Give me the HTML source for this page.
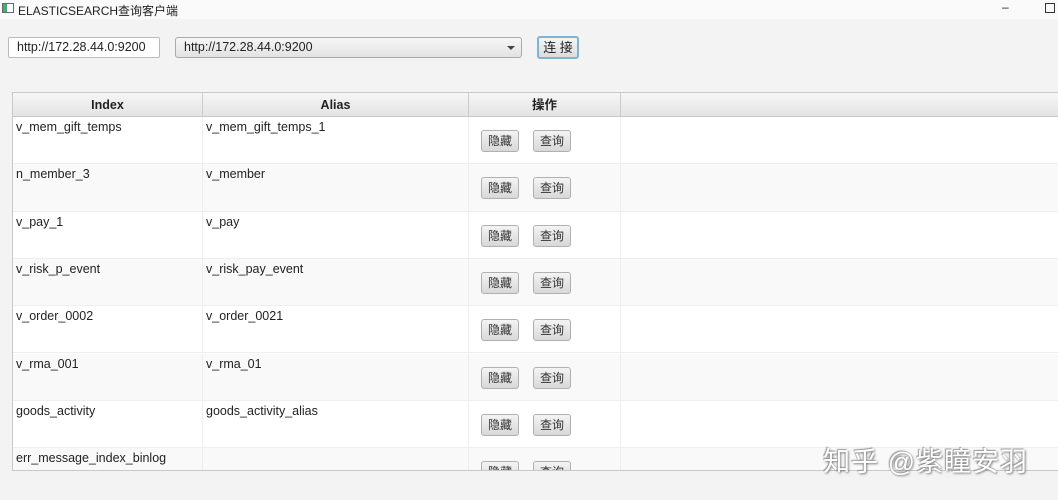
<!DOCTYPE html><html><head><meta charset="utf-8"><style>
*{box-sizing:border-box;margin:0;padding:0}
body{width:1058px;height:500px;background:#f3f3f3;font-family:"Liberation Sans","Noto Sans CJK SC",sans-serif;font-size:13px;color:#222;position:relative;overflow:hidden}
.abs{position:absolute}
.title{left:0;top:0;width:1058px;height:19px;background:#fafafa;font-size:12px}
.tf{left:8px;top:37px;width:152px;height:21px;background:#fff;border:1px solid #bbb;border-radius:2px;padding:2px 8px;font-size:12.5px}
.cb{left:175px;top:37px;width:347px;height:21px;background:linear-gradient(#f6f6f6,#e2e2e2);border:1px solid #aaa;border-radius:3px;padding:2px 8px;font-size:12.5px}
.btn{left:537px;top:36px;width:42px;height:23px;background:linear-gradient(#f6f6f6,#dcdcdc);border:2px solid #7eb4d4;border-radius:3px;text-align:center;line-height:19px;font-size:13px}
.tbl{left:12px;top:92px;width:1050px;height:379px;background:#fff;border:1px solid #c8c8c8;border-right:none;overflow:hidden}
.hdr{position:absolute;left:0;top:0;height:24px;width:1050px;background:linear-gradient(#f6f6f6,#e4e4e4);border-bottom:1px solid #c8c8c8}
.hc{position:absolute;top:0;height:24px;line-height:24px;text-align:center;font-weight:bold;font-size:12.5px;border-right:1px solid #ccc}
.row{position:absolute;left:0;width:1050px;height:47.3px;border-bottom:1px solid #eee}
.c{position:absolute;top:0;height:47.3px;border-right:1px solid #eee;padding:3px 3px;font-size:12.5px}
.b{position:absolute;top:13px;width:38px;height:22px;background:linear-gradient(#f4f4f4,#d8d8d8);border:1px solid #b0b0b0;border-radius:3px;text-align:center;line-height:20px;font-size:12px;color:#333}
.wm{right:30px;top:440px;font-size:27px;color:#fff;text-shadow:1px 1px 2px #777,-1px -1px 1px #999;letter-spacing:1px}
</style></head><body>
<div class="abs title"><span style="position:absolute;left:2px;top:3px;width:12px;height:10px;border:1px solid #666;background:linear-gradient(90deg,#4a7 40%,#fff 40%)"></span><span style="position:absolute;left:18px;top:2px">ELASTICSEARCH查询客户端</span><span style="position:absolute;left:1002px;top:0">–</span><span style="position:absolute;left:1045px;top:3px;width:10px;height:10px;border:1px solid #333"></span></div>
<div class="abs tf">http://172.28.44.0:9200</div>
<div class="abs cb">http://172.28.44.0:9200<span style="position:absolute;right:6px;top:8px;border:4px solid transparent;border-top:4px solid #444"></span></div>
<div class="abs btn">连 接</div>
<div class="abs tbl">
<div class="hdr"><div class="hc" style="left:0;width:190px">Index</div><div class="hc" style="left:190px;width:266px">Alias</div><div class="hc" style="left:456px;width:152px">操作</div></div>
<div class="row" style="top:24px;background:#fff"><div class="c" style="left:0;width:190px">v_mem_gift_temps</div><div class="c" style="left:190px;width:266px">v_mem_gift_temps_1</div><div class="c" style="left:456px;width:152px"><div class="b" style="left:12px">隐藏</div><div class="b" style="left:64px">查询</div></div></div>
<div class="row" style="top:71.3px;background:#f9f9f9"><div class="c" style="left:0;width:190px">n_member_3</div><div class="c" style="left:190px;width:266px">v_member</div><div class="c" style="left:456px;width:152px"><div class="b" style="left:12px">隐藏</div><div class="b" style="left:64px">查询</div></div></div>
<div class="row" style="top:118.6px;background:#fff"><div class="c" style="left:0;width:190px">v_pay_1</div><div class="c" style="left:190px;width:266px">v_pay</div><div class="c" style="left:456px;width:152px"><div class="b" style="left:12px">隐藏</div><div class="b" style="left:64px">查询</div></div></div>
<div class="row" style="top:165.9px;background:#f9f9f9"><div class="c" style="left:0;width:190px">v_risk_p_event</div><div class="c" style="left:190px;width:266px">v_risk_pay_event</div><div class="c" style="left:456px;width:152px"><div class="b" style="left:12px">隐藏</div><div class="b" style="left:64px">查询</div></div></div>
<div class="row" style="top:213.2px;background:#fff"><div class="c" style="left:0;width:190px">v_order_0002</div><div class="c" style="left:190px;width:266px">v_order_0021</div><div class="c" style="left:456px;width:152px"><div class="b" style="left:12px">隐藏</div><div class="b" style="left:64px">查询</div></div></div>
<div class="row" style="top:260.5px;background:#f9f9f9"><div class="c" style="left:0;width:190px">v_rma_001</div><div class="c" style="left:190px;width:266px">v_rma_01</div><div class="c" style="left:456px;width:152px"><div class="b" style="left:12px">隐藏</div><div class="b" style="left:64px">查询</div></div></div>
<div class="row" style="top:307.8px;background:#fff"><div class="c" style="left:0;width:190px">goods_activity</div><div class="c" style="left:190px;width:266px">goods_activity_alias</div><div class="c" style="left:456px;width:152px"><div class="b" style="left:12px">隐藏</div><div class="b" style="left:64px">查询</div></div></div>
<div class="row" style="top:355.1px;background:#f9f9f9"><div class="c" style="left:0;width:190px">err_message_index_binlog</div><div class="c" style="left:190px;width:266px"></div><div class="c" style="left:456px;width:152px"><div class="b" style="left:12px">隐藏</div><div class="b" style="left:64px">查询</div></div></div>
</div>
<div class="abs wm">知乎 @紫瞳安羽</div>
</body></html>
